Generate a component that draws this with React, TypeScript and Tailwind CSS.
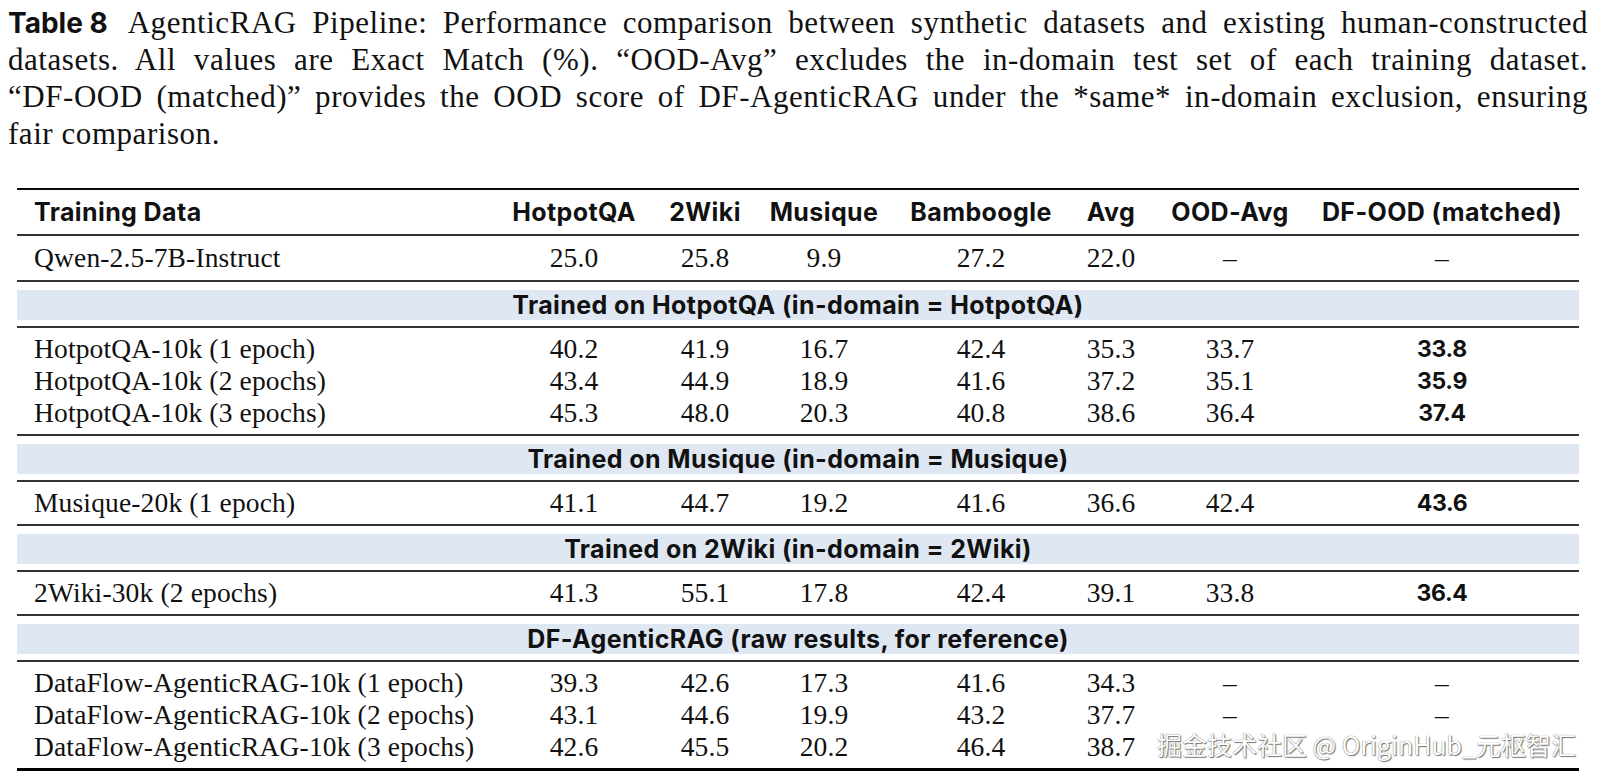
import React from "react";

const COLS =
  "grid grid-cols-[474px_166px_96px_142px_172px_88px_150px_274px] items-center";

const serif = "font-['Liberation_Serif',serif]";
const sans = "font-['Inter',sans-serif]";

type DataRow = { name: string; values: string[]; best?: string };

const headers = [
  "HotpotQA",
  "2Wiki",
  "Musique",
  "Bamboogle",
  "Avg",
  "OOD-Avg",
  "DF-OOD (matched)",
];

const baseline: DataRow = {
  name: "Qwen-2.5-7B-Instruct",
  values: ["25.0", "25.8", "9.9", "27.2", "22.0", "–", "–"],
};

// last row's dashes sit under the watermark, so they are left blank
const sections: { title: string; rows: DataRow[] }[] = [
  {
    title: "Trained on HotpotQA (in-domain = HotpotQA)",
    rows: [
      { name: "HotpotQA-10k (1 epoch)", values: ["40.2", "41.9", "16.7", "42.4", "35.3", "33.7"], best: "33.8" },
      { name: "HotpotQA-10k (2 epochs)", values: ["43.4", "44.9", "18.9", "41.6", "37.2", "35.1"], best: "35.9" },
      { name: "HotpotQA-10k (3 epochs)", values: ["45.3", "48.0", "20.3", "40.8", "38.6", "36.4"], best: "37.4" },
    ],
  },
  {
    title: "Trained on Musique (in-domain = Musique)",
    rows: [
      { name: "Musique-20k (1 epoch)", values: ["41.1", "44.7", "19.2", "41.6", "36.6", "42.4"], best: "43.6" },
    ],
  },
  {
    title: "Trained on 2Wiki (in-domain = 2Wiki)",
    rows: [
      { name: "2Wiki-30k (2 epochs)", values: ["41.3", "55.1", "17.8", "42.4", "39.1", "33.8"], best: "36.4" },
    ],
  },
  {
    title: "DF-AgenticRAG (raw results, for reference)",
    rows: [
      { name: "DataFlow-AgenticRAG-10k (1 epoch)", values: ["39.3", "42.6", "17.3", "41.6", "34.3", "–", "–"] },
      { name: "DataFlow-AgenticRAG-10k (2 epochs)", values: ["43.1", "44.6", "19.9", "43.2", "37.7", "–", "–"] },
      { name: "DataFlow-AgenticRAG-10k (3 epochs)", values: ["42.6", "45.5", "20.2", "46.4", "38.7", "", ""] },
    ],
  },
];

function Rule({ thick }: { thick?: boolean }) {
  return <div className={thick ? "h-[2px] bg-[#0a0a0a]" : "h-[2px] bg-[#333]"} />;
}

function Row({ row, tall }: { row: DataRow; tall?: boolean }) {
  return (
    <div
      className={`${COLS} ${tall ? "h-[44px]" : "h-[32px]"} ${serif} text-[27.5px] leading-[30px] tracking-[0.15px] text-[#111]`}
    >
      <div className="pl-[17px] whitespace-nowrap">{row.name}</div>
      {row.values.map((v, i) => (
        <div key={i} className="text-center">
          {v}
        </div>
      ))}
      {row.best && (
        <div className={`text-center ${sans} font-bold text-[23px] tracking-[-0.3px]`}>{row.best}</div>
      )}
    </div>
  );
}

function Band({ title }: { title: string }) {
  return (
    <div className="pt-[8px] pb-[6px]">
      <div
        className={`h-[30px] bg-[#dfe7f2] flex items-center justify-center ${sans} font-bold text-[25px] leading-[30px] tracking-[0.4px] text-[#111]`}
      >
        {title}
      </div>
    </div>
  );
}

export default function App() {
  return (
    <div className="min-h-screen bg-white text-[#111]">
      {/* caption */}
      <div className={`pl-[8px] pr-[14px] pt-[4px] ${serif} text-[31px] leading-[37px] tracking-[0.55px]`}>
        <div className="flex items-baseline h-[37px]">
          <span className={`${sans} font-bold text-[28px] tracking-normal mr-[20px] shrink-0`}>Table 8</span>
          <span className="flex-1 text-justify [text-align-last:justify]">
            AgenticRAG Pipeline: Performance comparison between synthetic datasets and existing human-constructed
          </span>
        </div>
        <div className="h-[37px] text-justify [text-align-last:justify]">
          datasets. All values are Exact Match (%). “OOD-Avg” excludes the in-domain test set of each training dataset.
        </div>
        <div className="h-[37px] text-justify [text-align-last:justify]">
          “DF-OOD (matched)” provides the OOD score of DF-AgenticRAG under the *same* in-domain exclusion, ensuring
        </div>
        <div className="h-[37px]">fair comparison.</div>
      </div>

      {/* table */}
      <div className="relative ml-[17px] mt-[36px] w-[1562px]">
        <Rule thick />
        <div className={`${COLS} h-[44px] ${sans} font-bold text-[25px] leading-[30px] tracking-[0.4px]`}>
          <div className="pl-[17px]">Training Data</div>
          {headers.map((h) => (
            <div key={h} className="text-center whitespace-nowrap">
              {h}
            </div>
          ))}
        </div>
        <Rule />
        <Row row={baseline} tall />
        <Rule />
        {sections.map((s, si) => (
          <div key={s.title}>
            <Band title={s.title} />
            <Rule />
            <div className="py-[5px]">
              {s.rows.map((r) => (
                <Row key={r.name} row={r} />
              ))}
            </div>
            {si < sections.length - 1 ? <Rule /> : <div className="h-[3px] bg-black" />}
          </div>
        ))}

        {/* watermark */}
        <div className="absolute left-[1140px] top-[545px] font-['Noto_Sans_CJK_SC',sans-serif] text-[25px] leading-[22px] text-white whitespace-nowrap [text-shadow:0_0_1px_#555,1px_1px_1px_#777]">
          掘金技术社区 @ OriginHub_元枢智汇
        </div>
      </div>
    </div>
  );
}
